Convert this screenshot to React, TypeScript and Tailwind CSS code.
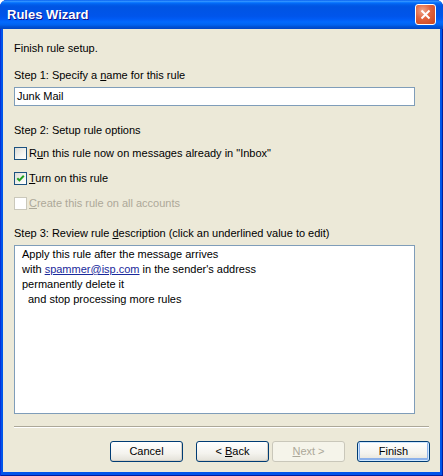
import React from "react";

function CheckBox({ checked, disabled }: { checked?: boolean; disabled?: boolean }) {
  return (
    <span
      className={`w-[13px] h-[13px] shrink-0 border flex items-center justify-center ${
        disabled
          ? "border-[#cac8bb] bg-white"
          : "border-[#1c5180] bg-[linear-gradient(135deg,#dcdcd7_0%,#f4f4f0_60%,#ffffff_100%)]"
      }`}
    >
      {checked && (
        <svg width="11" height="11" viewBox="0 0 11 11">
          <path d="M2.3 5.2 L4.4 7.4 L8.8 2.8" fill="none" stroke="#21a121" strokeWidth="2" />
        </svg>
      )}
    </span>
  );
}

function Button({
  children,
  primary,
  disabled,
}: {
  children: React.ReactNode;
  primary?: boolean;
  disabled?: boolean;
}) {
  return (
    <button
      className={`w-[73px] h-[21px] rounded-[3px] border text-[11px] leading-[13px] flex items-center justify-center ${
        disabled
          ? "border-[#c9c7ba] bg-[#f5f4ea] text-[#aca899]"
          : primary
          ? "border-[#003c74] text-black bg-[linear-gradient(180deg,#ffffff_0%,#f4f3ee_60%,#e3e1d8_100%)] shadow-[inset_0_0_0_1px_#cee7ff,inset_0_-1px_0_2px_#8cb1ea]"
          : "border-[#003c74] text-black bg-[linear-gradient(180deg,#ffffff_0%,#f4f3ee_60%,#e3e1d8_100%)] shadow-[inset_-1px_-1px_0_0_#d6d0c5]"
      }`}
    >
      <span className="whitespace-pre">{children}</span>
    </button>
  );
}

export default function App() {
  return (
    <div
      className="w-[443px] h-[476px] flex flex-col rounded-t-[7px] overflow-hidden bg-[#0055ea] shadow-[inset_1px_0_0_#0831d9,inset_-1px_0_0_#001ea0,inset_0_-1px_0_#001ea0]"
      style={{ fontFamily: '"Liberation Sans", Arial, sans-serif' }}
    >
      {/* TITLE BAR */}
      <div className="h-[29px] shrink-0 flex items-center justify-between pl-[7px] pr-[7px] bg-[linear-gradient(180deg,#0058ee_0%,#3593ff_4%,#288eff_6%,#127dff_8%,#036ffc_10%,#0262ee_14%,#0057e5_20%,#0054e3_24%,#0055eb_56%,#005bf5_66%,#026afe_76%,#0062ef_86%,#0052d6_92%,#0046c4_100%)]">
        <span className="text-white font-bold text-[13px] leading-[16px] [text-shadow:1px_1px_#0f1089] mt-[1px]">
          Rules Wizard
        </span>
        <span className="w-[21px] h-[21px] rounded-[3px] border border-white flex items-center justify-center bg-[radial-gradient(circle_at_35%_30%,#f0a68c_0%,#e1623c_45%,#c9441d_100%)]">
          <svg width="11" height="11" viewBox="0 0 11 11">
            <path d="M1.5 1.5 L9.5 9.5 M9.5 1.5 L1.5 9.5" stroke="white" strokeWidth="2" />
          </svg>
        </span>
      </div>

      {/* CLIENT AREA */}
      <div className="flex-1 ml-[3px] mr-[3px] mb-[4px] bg-[#ece9d8] pl-[11px] flex flex-col text-[11px] leading-[13px] text-black">
        <div className="mt-[13px]">Finish rule setup.</div>

        <div className="mt-[14px]">
          Step 1: Specify a <span className="underline">n</span>ame for this rule
        </div>
        <div className="mt-[5px] w-[401px] h-[19px] border border-[#7f9db9] bg-white flex items-center pl-[2px]">
          Junk Mail
        </div>

        <div className="mt-[18px]">Step 2: Setup rule options</div>
        <div className="mt-[10px] flex flex-col gap-[12px]">
          <div className="h-[13px] flex items-center gap-[2px]">
            <CheckBox />
            <span>
              R<span className="underline">u</span>n this rule now on messages already in "Inbox"
            </span>
          </div>
          <div className="h-[13px] flex items-center gap-[2px]">
            <CheckBox checked />
            <span>
              <span className="underline">T</span>urn on this rule
            </span>
          </div>
          <div className="h-[13px] flex items-center gap-[2px] text-[#aca899]">
            <CheckBox disabled />
            <span>
              <span className="underline">C</span>reate this rule on all accounts
            </span>
          </div>
        </div>

        <div className="mt-[17px]">
          Step 3: Review rule <span className="underline">d</span>escription (click an underlined value to edit)
        </div>
        <div className="mt-[5px] w-[401px] h-[169px] border border-[#7f9db9] bg-white pt-[1px] pl-[7px] leading-[15px]">
          <div>Apply this rule after the message arrives</div>
          <div>
            with <span className="underline text-[#1a2a9c]">spammer@isp.com</span> in the sender's address
          </div>
          <div>permanently delete it</div>
          <div className="pl-[6px]">and stop processing more rules</div>
        </div>

        <div className="mt-[12px] w-[415px] border-t border-t-[#aca899] border-b border-b-white" />

        <div className="mt-[13px] w-[416px] flex justify-end">
          <Button>Cancel</Button>
          <div className="ml-[13px]">
            <Button>
              {"< "}
              <span className="underline">B</span>ack
            </Button>
          </div>
          <div className="ml-[3px]">
            <Button disabled>
              <span className="underline">N</span>
              {"ext >"}
            </Button>
          </div>
          <div className="ml-[12px]">
            <Button primary>Finish</Button>
          </div>
        </div>
      </div>
    </div>
  );
}
